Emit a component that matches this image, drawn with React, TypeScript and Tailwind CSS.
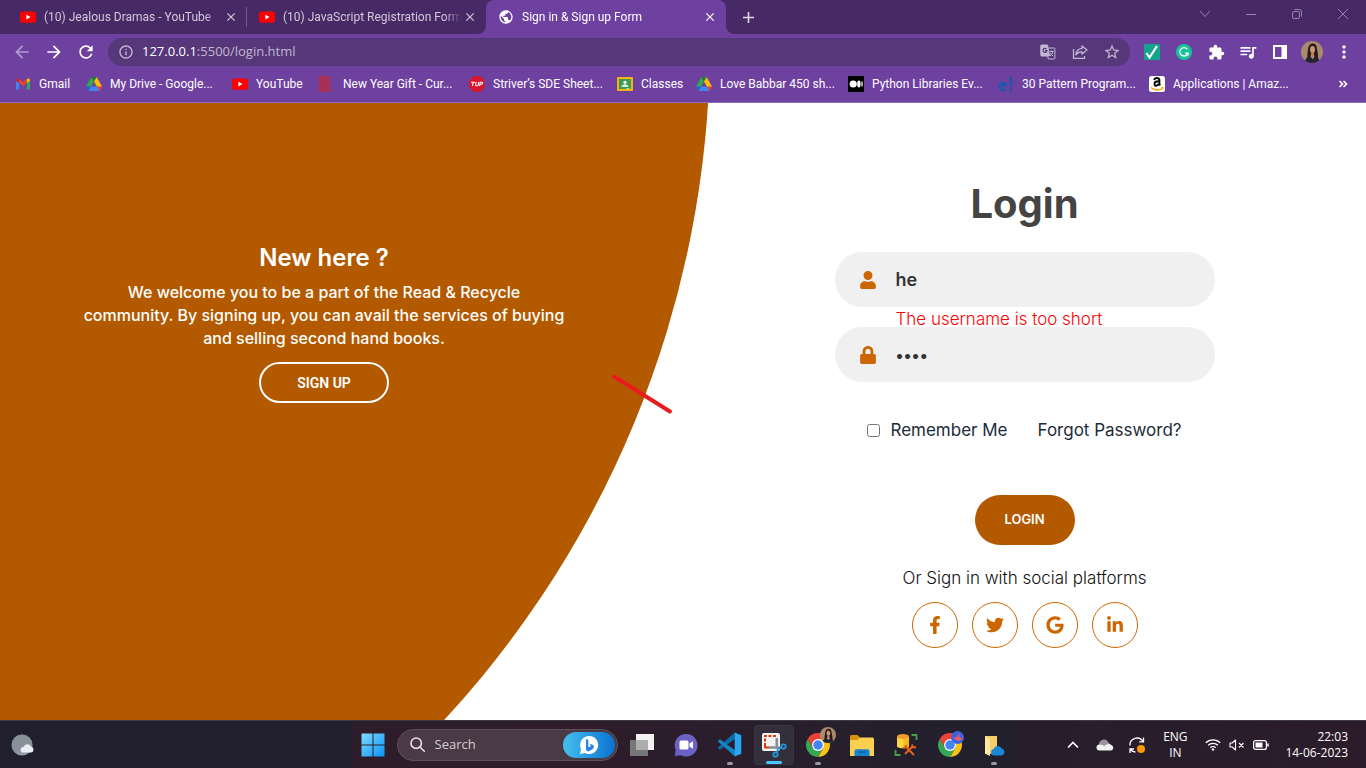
import { useState, type ReactNode } from "react";
import {
  MdAdd,
  MdArrowBack,
  MdArrowForward,
  MdClose,
  MdExtension,
  MdInfoOutline,
  MdMoreVert,
  MdPublic,
  MdQueueMusic,
  MdRefresh,
  MdStarBorder,
} from "react-icons/md";
import { FaFacebookF, FaGoogle, FaLinkedinIn, FaLock, FaTwitter, FaUser } from "react-icons/fa";

/* ---------- favicons ---------- */

const YouTube = () => (
  <svg width="16" height="16" viewBox="0 0 16 16" aria-hidden="true">
    <rect y="2.5" width="16" height="11.2" rx="2.8" fill="#f00" />
    <path d="M6.4 5.8 10.6 8.1 6.4 10.4z" fill="#fff" />
  </svg>
);

const Gmail = () => (
  <svg width="16" height="16" viewBox="0 0 16 16" aria-hidden="true">
    <path d="M1 4v8.6c0 .6.4 1 1 1h2.2V7z" fill="#4285f4" />
    <path d="M15 4v8.6c0 .6-.4 1-1 1h-2.200V7z" fill="#34a853" />
    <path d="M1 4.200C1 2.600 2.700 2 3.900 2.900L4.200 3.100V7.100L1 4.800z" fill="#c5221f" />
    <path d="M15 4.200C15 2.600 13.300 2 12.100 2.900L11.800 3.100V7.100L15 4.800z" fill="#fbbc04" />
    <path d="M4.200 3.100 8 6l3.800-2.900v4L8 10 4.200 7.100z" fill="#ea4335" />
  </svg>
);

const Drive = () => (
  <svg width="16" height="14" viewBox="0 0 87.3 78" aria-hidden="true">
    <path d="m6.6 66.85 3.85 6.65c.8 1.4 1.95 2.5 3.3 3.3l13.75-23.8h-27.5c0 1.55.4 3.1 1.2 4.5z" fill="#1967d2" />
    <path d="m43.65 25-13.75-23.8c-1.35.8-2.5 1.9-3.3 3.3l-25.4 44a9.06 9.06 0 0 0 -1.2 4.5h27.5z" fill="#34a853" />
    <path d="m73.55 76.8c1.35-.8 2.5-1.9 3.3-3.3l1.6-2.75 7.65-13.25c.8-1.4 1.2-2.95 1.2-4.5h-27.502l5.852 11.5z" fill="#ea4335" />
    <path d="m43.65 25 13.75-23.8c-1.35-.8-2.9-1.2-4.5-1.2h-18.5c-1.6 0-3.15.45-4.5 1.2z" fill="#188038" />
    <path d="m59.8 53h-32.3l-13.75 23.8c1.35.8 2.9 1.2 4.5 1.2h50.8c1.6 0 3.15-.45 4.5-1.2z" fill="#4285f4" />
    <path d="m73.4 26.5-12.7-22c-.8-1.4-1.95-2.5-3.3-3.3l-13.75 23.8 16.15 28h27.45c0-1.55-.4-3.1-1.2-4.5z" fill="#fbbc04" />
  </svg>
);

const CurlyB = () => (
  <svg width="16" height="16" viewBox="0 0 16 16" fill="none" aria-hidden="true">
    <path d="M0 0h8q3.500.3 3.500 4 0 2.500-1.500 3.800 2 1.200 2 4 0 3.700-4 4.200H0z" fill="#b52c46" />
    <path d="M1.500 0v16M3.500 0v16" stroke="#8d3a74" strokeWidth=".7" />
    <path d="M5.500 2.500h2q1.800.3 1.800 1.900T7.500 6.300h-2M5.500 9.500h2.200q2 .3 2 2.100t-2 2.100H5.500" stroke="#7d3b86" strokeWidth="1" />
  </svg>
);

const Tuf = () => (
  <svg width="16" height="16" viewBox="0 0 16 16" aria-hidden="true">
    <circle cx="8" cy="8" r="8" fill="#d8152a" />
    <path d="M2 6.200h4M4.200 6.200 3.600 10M7 6l-.4 3q0 .9 1.200.9t1.400-.9L9.600 6M10.600 10.100l.6-3.900h1.700q1 .2.7 1.100t-1.300 1h-1.200" fill="none" stroke="#fff" strokeWidth="1.100" />
  </svg>
);

const Classroom = () => (
  <svg width="16" height="14" viewBox="0 0 16 14" aria-hidden="true">
    <rect width="16" height="14" rx="1" fill="#f4b400" />
    <rect x="2" y="2" width="12" height="10" fill="#3c9a5a" />
    <circle cx="8" cy="5.300" r="1.600" fill="#fff" />
    <path d="M4.500 9.700q.4-2.200 3.500-2.200t3.500 2.200z" fill="#fff" />
    <path d="M9.500 11.300h3v.9h-3z" fill="#e6f4ea" />
  </svg>
);

const Medium = () => (
  <svg width="16" height="16" viewBox="0 0 16 16" aria-hidden="true">
    <rect width="16" height="16" fill="#000" />
    <circle cx="5.200" cy="8" r="3.600" fill="#fff" />
    <ellipse cx="10.900" cy="8" rx="1.700" ry="3.400" fill="#fff" />
    <ellipse cx="14" cy="8" rx=".7" ry="3" fill="#fff" />
  </svg>
);

const Edureka = () => (
  <svg width="16" height="16" viewBox="0 0 16 16" fill="none" stroke="#1d57a8" aria-hidden="true">
    <path d="M1.500 9.300h6.800A3.600 3.600 0 1 0 7.600 12.800" strokeWidth="2.200" />
    <path d="M13 1v9.500M13 12.500V15" strokeWidth="2.600" />
  </svg>
);

const Amazon = () => (
  <svg width="16" height="16" viewBox="0 0 16 16" fill="none" aria-hidden="true">
    <rect width="16" height="16" rx="2.500" fill="#fff" />
    <path d="M5.200 4q.5-2 2.700-2t2.500 2v4.200l.8 1.200" stroke="#000" strokeWidth="1.900" />
    <path d="M9.800 5.300Q5.500 5.300 5.500 7.800T7.600 9.600 10 7.500" stroke="#000" strokeWidth="1.900" />
    <path d="M1.800 11.500q6 4.500 11.700 1" stroke="#f90" strokeWidth="1.400" />
    <path d="M12 11.300h2.300l-.4 2.200" stroke="#f90" strokeWidth="1" />
  </svg>
);

/* ---------- browser chrome ---------- */

function Tab({ icon, title, active = false }: { icon: ReactNode; title: string; active?: boolean }) {
  return (
    <div
      className={
        active
          ? "relative flex h-full w-60 items-center rounded-t-lg bg-[#6e41a1] pr-2 pl-3 text-white"
          : "flex h-full w-[239px] items-center pr-2 pl-3 text-[#d2c8dc]"
      }
    >
      {active && (
        <>
          <svg className="absolute bottom-0 -left-2" width="8" height="8" aria-hidden="true">
            <path d="M8 0v8H0a8 8 0 0 0 8-8" fill="#6e41a1" />
          </svg>
          <svg className="absolute -right-2 bottom-0" width="8" height="8" aria-hidden="true">
            <path d="M0 0v8h8a8 8 0 0 1-8-8" fill="#6e41a1" />
          </svg>
        </>
      )}
      <button type="button" className="flex min-w-0 flex-1 items-center gap-2 text-left">
        <span className="shrink-0">{icon}</span>
        <span className="min-w-0 flex-1 overflow-hidden mask-r-from-90% whitespace-nowrap">{title}</span>
      </button>
      <button type="button" aria-label={"Close " + title} className="flex size-4 items-center justify-center">
        <MdClose size={14} />
      </button>
    </div>
  );
}

function TabStrip() {
  return (
    <div className="flex h-[34px] bg-[#472a65]">
      <div className="flex flex-1 pl-2">
        <Tab icon={<YouTube />} title="(10) Jealous Dramas - YouTube" />
        <div className="-ml-px h-5 w-px self-center bg-[#725790]" />
        <Tab icon={<YouTube />} title="(10) JavaScript Registration Form" />
        <Tab icon={<MdPublic size={16} />} title="Sign in &amp; Sign up Form" active />
        <button type="button" aria-label="New tab" className="ml-3 flex w-5 items-center justify-center text-[#e0d8e8]">
          <MdAdd size={19} />
        </button>
      </div>
      <div className="flex h-7 text-[#9482a7]">
        <button type="button" aria-label="Search tabs" className="flex w-[46px] items-center justify-center">
          <svg width="12" height="12" viewBox="0 0 12 12" fill="none" stroke="currentColor">
            <path d="m1 3 5 5.500L11 3" />
          </svg>
        </button>
        <button type="button" aria-label="Minimize" className="flex w-[46px] items-center justify-center">
          <svg width="12" height="12" viewBox="0 0 12 12" fill="none" stroke="currentColor">
            <path d="M1 6.500h10" />
          </svg>
        </button>
        <button type="button" aria-label="Restore" className="flex w-[46px] items-center justify-center">
          <svg width="12" height="12" viewBox="0 0 12 12" fill="none" stroke="currentColor">
            <rect x="1.500" y="3.500" width="7" height="7" rx="1.500" />
            <path d="M3.500 1.500H8A2.500 2.500 0 0 1 10.500 4v4.500" />
          </svg>
        </button>
        <button type="button" aria-label="Close window" className="flex w-[46px] items-center justify-center">
          <svg width="12" height="12" viewBox="0 0 12 12" fill="none" stroke="currentColor">
            <path d="m1 1 10 10M11 1 1 11" />
          </svg>
        </button>
      </div>
    </div>
  );
}

function ToolButton({ label, children }: { label: string; children: ReactNode }) {
  return (
    <button type="button" aria-label={label} className="flex h-7 w-8 shrink-0 items-center justify-center">
      {children}
    </button>
  );
}

const Portrait = ({ size }: { size: number }) => (
  <svg width={size} height={size} viewBox="0 0 22 22" aria-hidden="true">
    <defs>
      <clipPath id="portrait-clip">
        <circle cx="11" cy="11" r="11" />
      </clipPath>
    </defs>
    <g clipPath="url(#portrait-clip)">
      <rect width="22" height="22" fill="#a98a6c" />
      <path d="M6.500 19q-.5-6 .5-11 .8-5.500 4.800-5.500T16 8q1.500 5 1 11z" fill="#2a1a1a" />
      <path d="M3.500 22q.5-5.500 5-6.500h6q4 1 4.500 6.500z" fill="#20222f" />
      <ellipse cx="11.500" cy="8.500" rx="2.500" ry="3.600" fill="#cc9478" />
      <path d="M10.300 11.500h2.400l.8 4-1.900 3-2.100-3z" fill="#bb8264" />
    </g>
  </svg>
);

function Toolbar() {
  return (
    <div className="flex h-9 items-center bg-[#6e41a1] px-1.5 text-white">
      <span className="flex text-[#b49dcd]">
        <ToolButton label="Back"><MdArrowBack size={20} /></ToolButton>
      </span>
      <ToolButton label="Forward"><MdArrowForward size={20} /></ToolButton>
      <ToolButton label="Reload"><MdRefresh size={20} /></ToolButton>
      <div className="mx-1.5 flex h-7 min-w-0 flex-1 items-center rounded-full bg-[#55377a] pr-0.5 pl-2.5 text-[#c3b8d0]">
        <button type="button" aria-label="Site information" className="mr-2">
          <MdInfoOutline size={16} />
        </button>
        <div
          role="textbox"
          aria-label="Address"
          contentEditable
          suppressContentEditableWarning
          className="min-w-0 flex-1 overflow-hidden text-[13px] whitespace-nowrap"
        >
          <span className="text-white">127.0.0.1</span>:5500/login.html
        </div>
        <ToolButton label="Translate">
          <svg width="16" height="16" viewBox="0 0 16 16" fill="none" stroke="currentColor">
            <path d="M1.500 1h6l2 11h-8a.7.7 0 0 1-.7-.7V1.700q0-.7.7-.7z" fill="currentColor" />
            <path d="M8.500 4h5.700q.7 0 .7.7v9.600q0 .7-.7.7H8.500l-1-2.500" />
            <path d="M6.500 5A2 2 0 1 0 7 6.700H5" stroke="#55377a" strokeWidth="1.200" />
            <path d="M9.500 7.500h4M11.500 6.500v1M13 7.500q-.7 3-3 4.500M10.200 9q1 1.800 3 3" />
          </svg>
        </ToolButton>
        <ToolButton label="Share">
          <svg width="16" height="16" viewBox="0 0 16 16" fill="none" stroke="currentColor" strokeWidth="1.300">
            <path d="M1.500 5v9.300h11V12" />
            <path d="M10 2l5 4-5 4V7.800Q6 7.600 3.800 10.800 4.500 5 10 4.400z" strokeLinejoin="round" />
          </svg>
        </ToolButton>
        <ToolButton label="Bookmark this page"><MdStarBorder size={18} /></ToolButton>
      </div>
      <ToolButton label="Checker">
        <svg width="16" height="16" viewBox="0 0 16 16">
          <rect width="16" height="16" fill="#12a58c" />
          <path d="m2.500 9 3 4.500L13 2" fill="none" stroke="#fff" strokeWidth="2.200" />
        </svg>
      </ToolButton>
      <ToolButton label="Writing assistant">
        <svg width="16" height="16" viewBox="0 0 16 16" fill="none" stroke="#fff">
          <circle cx="8" cy="8" r="8" fill="#15c39a" stroke="none" />
          <path d="M11.300 5.200A4.200 4.200 0 1 0 12 9.200H9.200M12 9v2.500" strokeWidth="1.400" />
        </svg>
      </ToolButton>
      <ToolButton label="Extensions"><MdExtension size={17} /></ToolButton>
      <ToolButton label="Media"><MdQueueMusic size={20} /></ToolButton>
      <ToolButton label="Side panel">
        <svg width="14" height="14" viewBox="0 0 14 14">
          <path d="M0 0h14v14H0zM2 2v10h6.500V2z" fill="#fff" fillRule="evenodd" />
        </svg>
      </ToolButton>
      <ToolButton label="Profile"><Portrait size={22} /></ToolButton>
      <ToolButton label="Menu"><MdMoreVert size={20} /></ToolButton>
    </div>
  );
}

const bookmarks = [
  { label: "Gmail", icon: <Gmail />, width: "w-[71px]" },
  { label: "My Drive - Google...", icon: <Drive />, width: "w-[146px]" },
  { label: "YouTube", icon: <YouTube />, width: "w-[87px]" },
  { label: "New Year Gift - Cur...", icon: <CurlyB />, width: "w-[150px]" },
  { label: "Striver’s SDE Sheet...", icon: <Tuf />, width: "w-[148px]" },
  { label: "Classes", icon: <Classroom />, width: "w-[79px]" },
  { label: "Love Babbar 450 sh...", icon: <Drive />, width: "w-[152px]" },
  { label: "Python Libraries Ev...", icon: <Medium />, width: "w-[150px]" },
  { label: "30 Pattern Program...", icon: <Edureka />, width: "w-[151px]" },
  { label: "Applications | Amaz...", icon: <Amazon />, width: "w-[150px]" },
];

function BookmarksBar() {
  return (
    <nav aria-label="Bookmarks" className="flex h-[33px] items-center border-b border-[#8f6cb6] bg-[#6e41a1] pb-1 pl-[15px] font-['Roboto',sans-serif] text-white">
      {bookmarks.map((b) => (
        <a key={b.label} href="#" className={"flex shrink-0 items-center gap-2 whitespace-nowrap " + b.width}>
          <span className="flex w-4 shrink-0 justify-center">{b.icon}</span>
          {b.label}
        </a>
      ))}
      <button type="button" aria-label="More bookmarks" className="mr-[18px] ml-auto">
        <svg width="10" height="8" viewBox="0 0 10 8" fill="none" stroke="#fff" strokeWidth="1.600">
          <path d="m1.500 1 3 3-3 3M5.500 1l3 3-3 3" />
        </svg>
      </button>
    </nav>
  );
}

/* ---------- login page ---------- */

const socials = [
  { label: "Facebook", icon: <FaFacebookF size={18} /> },
  { label: "Twitter", icon: <FaTwitter size={18} /> },
  { label: "Google", icon: <FaGoogle size={18} /> },
  { label: "LinkedIn", icon: <FaLinkedinIn size={18} /> },
];

function LoginPage() {
  const [user, setUser] = useState("he");
  const [password, setPassword] = useState("1234");
  return (
    <main className="relative grid flex-1 grid-cols-2 overflow-hidden bg-white font-['Inter',sans-serif]">
      <div className="absolute -top-[10%] right-[48%] size-[2000px] -translate-y-1/2 rounded-full bg-[#b35900]" />

      <section className="relative flex flex-col items-center pt-[138px] pr-[35px] text-center text-white">
        <h3 className="text-2xl leading-[34px] font-semibold">New here ?</h3>
        <p className="mt-1.5 max-w-[500px] text-base leading-[23px] font-medium">
          We welcome you to be a part of the Read &amp; Recycle
          <br />
          community. By signing up, you can avail the services of buying
          <br />
          and selling second hand books.
        </p>
        <button
          type="button"
          className="mt-3 h-[41px] w-[130px] rounded-full border-2 border-white font-['Roboto',sans-serif] text-sm font-semibold"
        >
          SIGN UP
        </button>
      </section>

      <form className="relative flex flex-col items-center pt-[71px]" onSubmit={(e) => e.preventDefault()}>
        <h2 className="text-[40px] leading-[60px] font-bold text-[#444]">Login</h2>
        <div className="mt-[18px] w-[380px]">
          <div className="flex h-[55px] items-center rounded-full bg-[#f0f0f0] px-1.5">
            <label htmlFor="username" aria-label="Username" className="flex w-[55px] justify-center text-[#cc6600]">
              <FaUser size={18} />
            </label>
            <input
              id="username"
              type="text"
              value={user}
              onChange={(e) => setUser(e.target.value)}
              className="min-w-0 flex-1 bg-transparent text-lg font-semibold text-[#333] outline-none"
            />
          </div>
          <p className="h-5 pl-[61px] text-[17px] leading-6 font-light text-[#ff0000]">The username is too short</p>
          <div className="flex h-[55px] items-center rounded-full bg-[#f0f0f0] px-1.5">
            <label htmlFor="password" aria-label="Password" className="flex w-[55px] justify-center text-[#cc6600]">
              <FaLock size={18} />
            </label>
            <input
              id="password"
              type="password"
              value={password}
              onChange={(e) => setPassword(e.target.value)}
              className="min-w-0 flex-1 bg-transparent text-base font-semibold text-[#333] outline-none"
            />
          </div>
        </div>
        <div className="mt-9 flex h-6 items-center gap-[30px] text-[17px] text-[#1c2b39]">
          <label className="flex items-center gap-2.5">
            <input type="checkbox" className="size-[13px]" />
            Remember Me
          </label>
          <a href="#">Forgot Password?</a>
        </div>
        <button type="submit" className="mt-[53px] h-[50px] w-[100px] rounded-full bg-[#b35900] text-[13px] font-semibold text-white">
          LOGIN
        </button>
        <p className="mt-[21px] text-[17px] leading-6 font-light text-[#111]">Or Sign in with social platforms</p>
        <div className="mt-3 flex gap-3.5">
          {socials.map((s) => (
            <a
              key={s.label}
              href="#"
              aria-label={s.label}
              className="flex size-[46px] items-center justify-center rounded-full border border-[#cc6600] text-[#cc6600]"
            >
              {s.icon}
            </a>
          ))}
        </div>
      </form>

      <svg className="pointer-events-none absolute top-[270px] left-[610px]" width="64" height="42" aria-hidden="true">
        <path d="m4 3.500 56 35" stroke="#e81c1f" strokeWidth="4" strokeLinecap="round" />
      </svg>
    </main>
  );
}

/* ---------- taskbar ---------- */

const Chrome = () => (
  <svg width="26" height="26" viewBox="0 0 24 24" aria-hidden="true">
    <path d="M2.470 6.500A11 11 0 0 1 21.530 6.500H12L7.240 14.750z" fill="#ea4335" />
    <path d="M21.530 6.500A11 11 0 0 1 12 23L16.760 14.750 12 6.500z" fill="#fbc116" />
    <path d="M12 23A11 11 0 0 1 2.470 6.500L7.240 14.750H16.760z" fill="#34a853" />
    <circle cx="12" cy="12" r="5.500" fill="#fff" />
    <circle cx="12" cy="12" r="4.400" fill="#4285f4" />
  </svg>
);

function TaskButton({
  label,
  state = "idle",
  children,
}: {
  label: string;
  state?: "idle" | "running" | "active";
  children: ReactNode;
}) {
  return (
    <button type="button" aria-label={label} className="flex h-11 w-11 shrink-0 items-center justify-center">
      <span
        className={
          state === "active"
            ? "relative flex size-10 items-center justify-center rounded border border-[#393541] bg-[#33303b]"
            : "relative flex size-10 items-center justify-center"
        }
      >
        {children}
        {state === "running" && <span className="absolute bottom-0 h-[3px] w-1.5 rounded-full bg-[#9a9aa2]" />}
        {state === "active" && <span className="absolute bottom-0 h-[3px] w-4 rounded-full bg-[#4cc2ff]" />}
      </span>
    </button>
  );
}

function Taskbar() {
  return (
    <footer className="grid h-12 grid-cols-[1fr_auto_1fr] items-center border-t border-[#3c3a45] bg-linear-to-r from-[#211f2d] via-[#21202d] to-[#2c1c2b] text-white">
      <button type="button" aria-label="Weather" className="ml-[11px] w-6">
        <svg width="24" height="24" viewBox="0 0 24 24">
          <circle cx="11" cy="12" r="10.500" fill="#929ba4" />
          <path d="M11 1.500A10.500 10.500 0 0 1 21.500 12L5 20A10.500 10.500 0 0 1 11 1.500" fill="#7c868f" opacity=".45" />
          <path d="M12.500 19.500a2.800 2.800 0 0 1 0-5.600 4.200 4.200 0 0 1 7.500-.5 3.100 3.100 0 0 1 0 6.100z" fill="#e9eef3" />
        </svg>
      </button>

      <div className="flex h-full items-center bg-linear-to-r from-[#2d1d2b] via-[#2d1d2b] via-40% to-[#21202d]">
        <TaskButton label="Start">
          <svg width="24" height="24" viewBox="0 0 24 24">
            <defs>
              <linearGradient id="start" x1="0" y1="0" x2="1" y2="1">
                <stop offset="0" stopColor="#7ddcff" />
                <stop offset="1" stopColor="#0a93f5" />
              </linearGradient>
            </defs>
            <path d="M.5.5h11v11H.5zM12.500.5h11v11h-11zM.5 12.500h11v11H.5zM12.500 12.500h11v11h-11z" fill="url(#start)" />
          </svg>
        </TaskButton>
        <div className="mx-0.5 flex h-8 w-[221px] items-center rounded-full border border-[#5e4f5a] bg-[#493a45] pr-0.5 pl-3">
          <svg width="15" height="15" viewBox="0 0 15 15" fill="none" stroke="#e6e0e4" strokeWidth="1.600" aria-hidden="true">
            <circle cx="6.200" cy="6.200" r="5.200" />
            <path d="m10 10 4.300 4.300" strokeLinecap="round" />
          </svg>
          <input
            type="search"
            aria-label="Search"
            placeholder="Search"
            className="ml-2.5 min-w-0 flex-1 bg-transparent text-[13px] outline-none placeholder:text-[#d5cdd2]"
          />
          <button type="button" aria-label="Bing chat" className="flex h-[26px] w-[52px] items-center justify-center rounded-full bg-linear-to-r from-[#45c0ee] to-[#0a72d2]">
            <svg width="20" height="20" viewBox="0 0 20 20">
              <path d="M10 1a9 9 0 1 1-4 17L1 19l1-5A9 9 0 0 1 10 1" fill="#fff" />
              <path d="m7 4 2.300 1v7.500L12 11 10.500 8.500l4 1.700q1 3-1.500 4.300L9.300 16.500 7 15z" fill="#2a7fe8" />
            </svg>
          </button>
        </div>
        <TaskButton label="Task view">
          <svg width="24" height="24" viewBox="0 0 24 24">
            <rect x="6" y="1" width="18" height="16" fill="#f1f1f1" />
            <rect y="7" width="18" height="16" fill="#777676" />
            <path d="M6 7h12v10H6z" fill="#aeadad" />
          </svg>
        </TaskButton>
        <TaskButton label="Chat">
          <svg width="24" height="24" viewBox="0 0 24 24">
            <path d="M12 1a11.300 11.300 0 1 1-5 21.300L.7 23l1-6A11.300 11.300 0 0 1 12 1" fill="#6c62c6" />
            <rect x="5.500" y="7.500" width="9" height="9" rx="1.500" fill="#fff" />
            <path d="m15.500 10.500 3.500-2.300v7.600l-3.500-2.300z" fill="#fff" />
          </svg>
        </TaskButton>
        <TaskButton label="Visual Studio Code" state="running">
          <svg width="25" height="25" viewBox="0 0 24 24">
            <path d="M.7 15.200 17 .5V6.800L2.700 17z" fill="#0b6cab" />
            <path d="M.7 8.800 2.700 7 17.300 17.500V23.500z" fill="#1585ca" />
            <path d="M17 .5 23.300 3.200V20.800L17 23.500z" fill="#2aa7f0" />
          </svg>
        </TaskButton>
        <TaskButton label="Snipping Tool" state="active">
          <svg width="26" height="26" viewBox="0 0 26 26">
            <rect x="1" y="1" width="18" height="18" rx="2" fill="#f3f3f3" />
            <path d="M3 3h3v2H3zM7.500 3h3v2h-3zM12 3h3v2h-3zM3 6.500h2v3H3zM3 11h2v3.500h3v2H3z" fill="#d83b01" />
            <path d="M15.800 6v11M8 15.500h12" stroke="#8a8f93" strokeWidth="2.600" />
            <circle cx="22.500" cy="14.500" r="2.200" fill="none" stroke="#2196e0" strokeWidth="1.800" />
            <circle cx="14.500" cy="22.500" r="2.200" fill="none" stroke="#2196e0" strokeWidth="1.800" />
            <path d="M15.500 20.500 17 17l3.500-1.500" fill="none" stroke="#2196e0" strokeWidth="1.600" />
          </svg>
        </TaskButton>
        <TaskButton label="Google Chrome, first profile" state="running">
          <Chrome />
          <span className="absolute top-0.5 right-0.5"><Portrait size={16} /></span>
        </TaskButton>
        <TaskButton label="File Explorer">
          <svg width="24" height="24" viewBox="0 0 24 24">
            <path d="M0 3.500Q0 2 1.500 2h6L10 4.500v4H0z" fill="#d9920c" />
            <path d="M0 7h7.500L10 4.500h12.500Q24 4.500 24 6v17H0z" fill="#fcd04f" />
            <path d="M4.500 23v-5q0-1.800 1.800-1.800h11.400q1.800 0 1.800 1.800v5z" fill="#1683cf" />
            <path d="M8 19h8" stroke="#0d5fa0" strokeWidth="1.300" />
          </svg>
        </TaskButton>
        <TaskButton label="Database tools">
          <svg width="24" height="24" viewBox="0 0 24 24">
            <path d="M3 4v10q5.500 2.500 12 0V4z" fill="#fbd63c" />
            <path d="M9.500 5h5.500v9q-2.700 1-5.500 1z" fill="#f5b921" />
            <ellipse cx="9" cy="3.500" rx="6" ry="2.500" fill="#f19a2c" />
            <path d="M17.500 2h5v5M1.500 17v5h5" fill="none" stroke="#45a049" strokeWidth="1.800" />
            <path d="m11 21 8-8M12 14l8 8M9.500 15.500l3.500-3.500M18 11.500l1 2.500 3 .5" fill="none" stroke="#e8621b" strokeWidth="2" />
          </svg>
        </TaskButton>
        <TaskButton label="Google Chrome, second profile">
          <Chrome />
          <svg className="absolute top-1.5 right-1.5" width="13" height="13" viewBox="0 0 13 13" aria-hidden="true">
            <circle cx="6.500" cy="6.500" r="6.500" fill="#3d62df" />
            <path d="m2 7 4-1 2-4 .5 4L12 8 7 10z" fill="#ec5a6a" />
          </svg>
        </TaskButton>
        <TaskButton label="OneDrive folder" state="running">
          <svg width="22" height="22" viewBox="0 0 22 22">
            <path d="M2 2h12v18H2z" fill="#f7cf68" />
            <path d="M2 2 7 5v17l-5-2.500z" fill="#ffe6a0" />
            <path d="M11 21.500a3.300 3.300 0 0 1-.3-6.500 4.300 4.300 0 0 1 8-.5 3.600 3.600 0 0 1-.2 7z" fill="#1887d8" />
          </svg>
        </TaskButton>
      </div>

      <div className="flex items-center justify-end pr-[18px] text-xs leading-4">
        <button type="button" aria-label="Show hidden icons" className="flex w-8 justify-center">
          <svg width="12" height="8" viewBox="0 0 12 8" fill="none" stroke="#fff" strokeWidth="1.600">
            <path d="m1 6.500 5-5 5 5" />
          </svg>
        </button>
        <button type="button" aria-label="OneDrive" className="flex w-8 justify-center">
          <svg width="18" height="12" viewBox="0 0 18 12">
            <path d="M3 6a5 5 0 0 1 9.500-2.500L16 7 9 9z" fill="#96969d" />
            <path d="M3.500 11.500a3 3 0 0 1 0-6q2.500 0 5 1.500 4-3.500 7-.7a2.700 2.700 0 0 1-.7 5.200z" fill="#f2f2f2" />
          </svg>
        </button>
        <button type="button" aria-label="Windows Update" className="flex w-8 justify-center">
          <svg width="18" height="18" viewBox="0 0 18 18" fill="none" stroke="#fff" strokeWidth="1.300">
            <path d="M2 9.500A7 7 0 0 1 15 5.500M15.500 1.500v4.300h-4.200M2 17v-4h4M2.500 13.500q2 2.500 5 2.500" />
            <circle cx="13" cy="13" r="4" fill="#ff9800" stroke="none" />
          </svg>
        </button>
        <button type="button" className="w-11 text-center">
          ENG
          <br />
          IN
        </button>
        <button type="button" aria-label="Network, sound and battery" className="ml-2 flex items-center gap-2">
          <svg width="16" height="13" viewBox="0 0 16 13" fill="none" stroke="#fff" strokeWidth="1.300">
            <path d="M.8 4.800a10.200 10.200 0 0 1 14.400 0M3.100 7.300a7 7 0 0 1 9.800 0M5.400 9.700a3.700 3.700 0 0 1 5.200 0" />
            <circle cx="8" cy="11.500" r="1.200" fill="#fff" stroke="none" />
          </svg>
          <svg width="16" height="12" viewBox="0 0 16 12" fill="none" stroke="#fff" strokeWidth="1.100">
            <path d="M1 4h2.200L6.500 1v10L3.200 8H1zM10 4l4.500 4.500M14.500 4 10 8.500" strokeLinejoin="round" />
          </svg>
          <svg width="16" height="10" viewBox="0 0 16 10" fill="none" stroke="#fff" strokeWidth="1.200">
            <rect x=".6" y=".6" width="12.800" height="8.800" rx="2" />
            <path d="M2.500 2.500h7v5h-7z" fill="#fff" stroke="none" />
            <path d="M15 3.500v3" strokeWidth="1.500" />
          </svg>
        </button>
        <button type="button" className="ml-4 text-right">
          22:03
          <br />
          14-06-2023
        </button>
      </div>
    </footer>
  );
}

export default function App() {
  return (
    <div className="flex min-h-screen flex-col font-['Open_Sans','Noto_Sans',sans-serif] text-xs">
      <header>
        <div className="font-['Roboto',sans-serif]">
          <TabStrip />
        </div>
        <Toolbar />
        <BookmarksBar />
      </header>
      <LoginPage />
      <Taskbar />
    </div>
  );
}
